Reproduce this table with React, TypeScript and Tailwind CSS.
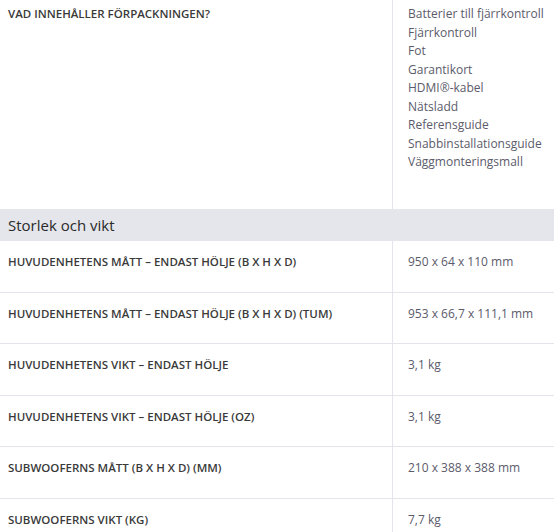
import React from "react";

const items = [
  "Batterier till fjärrkontroll",
  "Fjärrkontroll",
  "Fot",
  "Garantikort",
  "HDMI®-kabel",
  "Nätsladd",
  "Referensguide",
  "Snabbinstallationsguide",
  "Väggmonteringsmall",
];

const rows: [string, string][] = [
  ["HUVUDENHETENS MÅTT – ENDAST HÖLJE (B X H X D)", "950 x 64 x 110 mm"],
  ["HUVUDENHETENS MÅTT – ENDAST HÖLJE (B X H X D) (TUM)", "953 x 66,7 x 111,1 mm"],
  ["HUVUDENHETENS VIKT – ENDAST HÖLJE", "3,1 kg"],
  ["HUVUDENHETENS VIKT – ENDAST HÖLJE (OZ)", "3,1 kg"],
  ["SUBWOOFERNS MÅTT (B X H X D) (MM)", "210 x 388 x 388 mm"],
  ["SUBWOOFERNS VIKT (KG)", "7,7 kg"],
];

export default function App() {
  return (
    <div
      className="w-[554px] h-[532px] overflow-hidden bg-white"
      style={{ fontFamily: '"Open Sans", "Noto Sans", sans-serif' }}
    >
      <div className="flex h-[209px]">
        <div className="w-[392px] pl-2 pt-[6px] text-[11.5px] font-semibold text-[#3a3a3a] leading-[16px]">
          VAD INNEHÅLLER FÖRPACKNINGEN?
        </div>
        <div className="flex-1 border-l border-[#e4e4ea] pl-[15px] pt-[5px] text-[12px] leading-[18.5px] text-[#5b5b6b]">
          {items.map((t) => (
            <div key={t}>{t}</div>
          ))}
        </div>
      </div>
      <div className="h-[32px] bg-[#e4e6eb] pl-2 flex items-center text-[15px] text-[#2a2a2a]">
        Storlek och vikt
      </div>
      {rows.map(([l, v], i) => (
        <div key={i} className="flex h-[51.5px] border-b border-[#e4e4ea]">
          <div className="w-[392px] pl-2 pt-[13px] text-[11.5px] font-semibold text-[#3a3a3a] leading-[16px]">
            {l}
          </div>
          <div className="flex-1 border-l border-[#e4e4ea] pl-[15px] pt-[13px] text-[12px] leading-[16px] text-[#5b5b6b]">
            {v}
          </div>
        </div>
      ))}
    </div>
  );
}
